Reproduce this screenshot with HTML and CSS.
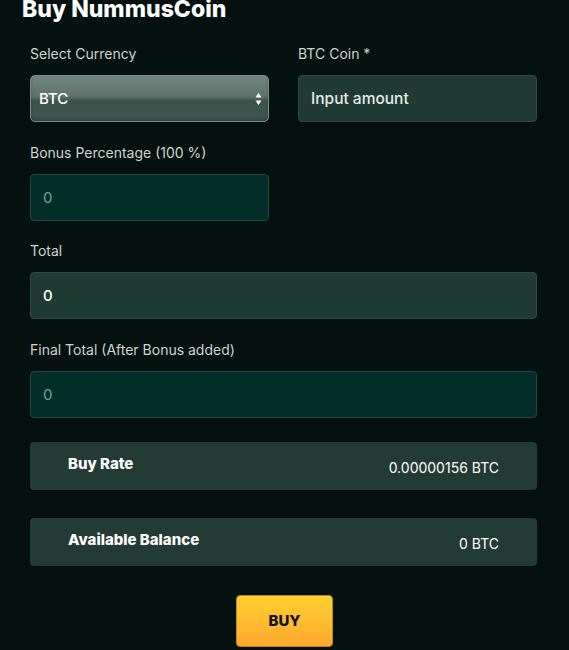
FILE: index.html
```html
<!DOCTYPE html>
<html>
<head>
<meta charset="utf-8">
<link rel="stylesheet" href="styles.css">
</head>
<body>
<div class="page">
  <h1 class="title">Buy NummusCoin</h1>
  <div class="row">
    <div class="field">
      <label class="label">Select Currency</label>
      <div class="select"><span>BTC</span>
        <svg class="arrows" width="7" height="14" viewBox="0 0 7 14"><path d="M3.5 1 L6.5 5.5 L0.5 5.5 Z" fill="#fff"/><path d="M3.5 13 L6.5 8.5 L0.5 8.5 Z" fill="#fff"/></svg>
      </div>
    </div>
    <div class="field">
      <label class="label">BTC Coin *</label>
      <div class="input input-light text-light">Input amount</div>
    </div>
  </div>
  <div class="row">
    <div class="field">
      <label class="label">Bonus Percentage (100 %)</label>
      <div class="input input-dark text-muted">0</div>
    </div>
    <div class="field"></div>
  </div>
  <div class="field">
    <label class="label">Total</label>
    <div class="input input-light text-white">0</div>
  </div>
  <div class="field">
    <label class="label">Final Total (After Bonus added)</label>
    <div class="input input-dark text-muted">0</div>
  </div>
  <div class="card card-first">
    <span class="card-key">Buy Rate</span>
    <span class="card-val">0.00000156 BTC</span>
  </div>
  <div class="card card-second">
    <span class="card-key">Available Balance</span>
    <span class="card-val">0 BTC</span>
  </div>
  <div class="actions">
    <button class="buy">BUY</button>
  </div>
</div>
</body>
</html>
```
FILE: styles.css
```css
* { box-sizing: border-box; }
html, body {
  margin: 0;
  padding: 0;
  background: #04110f;
  font-family: Inter, "Open Sans", sans-serif;
  color: #fff;
  overflow: hidden;
}
.page {
  padding: 0 32px 0 30px;
}
.title {
  margin: 0 0 0 -8px;
  font-size: 23px;
  font-weight: 800;
  line-height: 18px;
  letter-spacing: 0;
  color: #fff;
}
.row {
  display: grid;
  grid-template-columns: 1fr 1fr;
  column-gap: 29px;
}
.field {
  display: flex;
  flex-direction: column;
}
.label {
  font-size: 14px;
  line-height: 17px;
  color: #cdd4d1;
  margin-bottom: 13px;
  margin-top: 21.5px;
}
.title + .row .label { margin-top: 0; }
.title + .row .field { margin-top: 27px; }
.select {
  height: 47px;
  border-radius: 5px;
  border: 1px solid #7b8e88;
  background: linear-gradient(to bottom, #71857f 0%, #5e736c 45%, #3b534b 55%, #3f564f 100%);
  display: flex;
  align-items: center;
  justify-content: space-between;
  padding: 0 6px 0 8px;
  font-size: 15px;
  font-weight: 500;
  color: #fff;
  box-shadow: inset 0 -2px 3px rgba(0,0,0,0.25);
}
.arrows { display: block; }
.input {
  height: 47px;
  border-radius: 4px;
  display: flex;
  align-items: center;
  padding: 0 12px;
  font-size: 15px;
}
.input-light {
  background: #1f3b33;
  border: 1px solid #2c4a41;
}
.input-dark {
  background: #022d28;
  border: 1px solid #1e4a40;
}
.text-light { color: #e4ebe8; font-weight: 500; font-size: 15.5px; }
.text-white { color: #fff; font-weight: 500; }
.text-muted { color: #7f9d94; }
.card {
  height: 48px;
  border-radius: 4px;
  background: #223b34;
  display: flex;
  align-items: center;
  justify-content: space-between;
  padding: 0 38px 5px 38px;
}
.card-first { margin-top: 24px; }
.card-second { margin-top: 28px; }
.card-key {
  font-size: 15px;
  font-weight: 800;
  color: #fff;
}
.card-val {
  font-size: 14px;
  color: #fff;
  padding-top: 8px;
}
.actions {
  display: flex;
  justify-content: center;
  margin-top: 29px;
  padding-left: 2px;
}
.buy {
  width: 97px;
  height: 52px;
  border: 1px solid #b78a1a;
  border-radius: 4px;
  background: linear-gradient(to bottom, #ffd02f, #ffa82f);
  font-family: Inter, sans-serif;
  font-size: 15px;
  font-weight: 800;
  color: #111;
  padding: 0;
}
```
